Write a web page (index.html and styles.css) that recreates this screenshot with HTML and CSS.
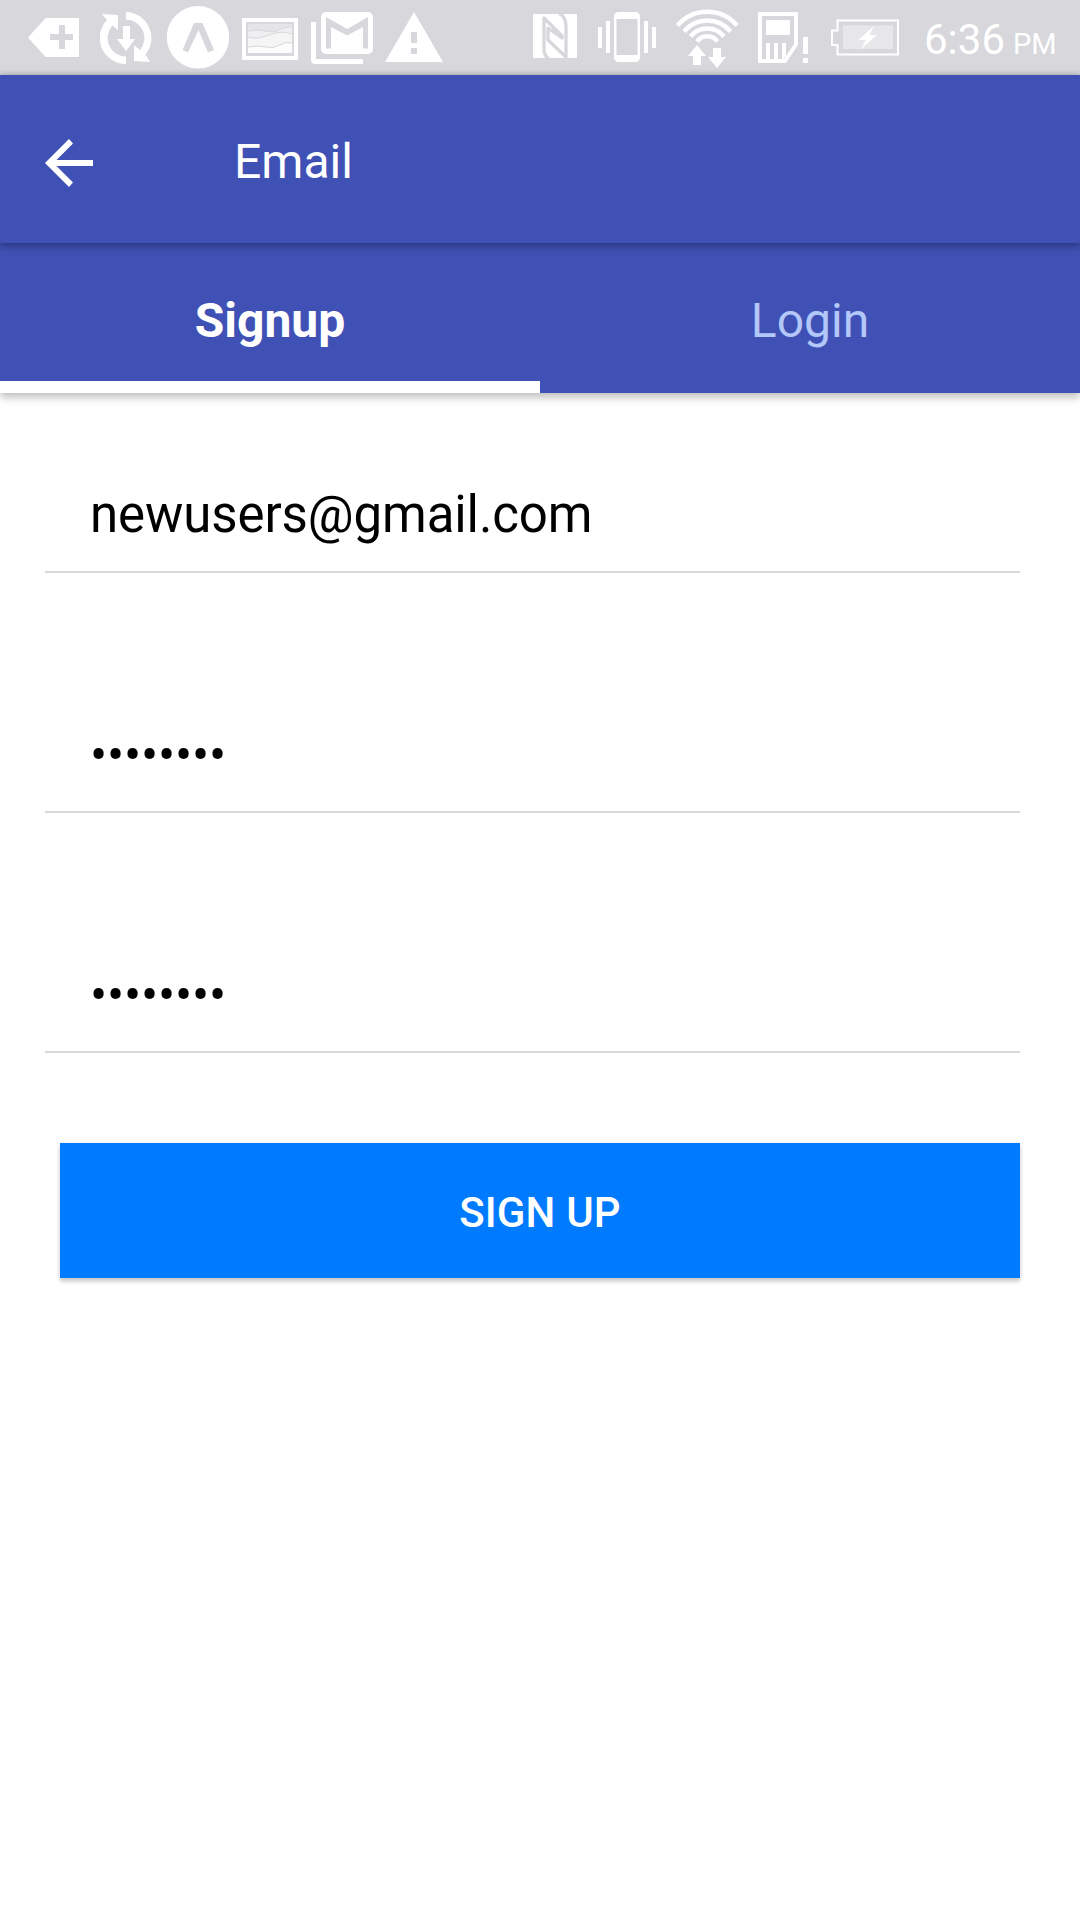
FILE: index.html
```html
<!DOCTYPE html>
<html lang="en">
<head>
<meta charset="utf-8">
<title>Email</title>
<link rel="stylesheet" href="styles.css">
</head>
<body>
<div class="screen">
  <div class="status-bar">
    <div class="status-group">
      <svg class="icon" width="52" height="75" viewBox="28 0 52 75"><path fill-rule="evenodd" d="M28 37.500L45.500 18H79V57H45.500ZM59 25V34H50V40H59V49H65V40H73V34H65V25Z"/></svg>
      <svg class="icon" width="52" height="75" viewBox="100 0 52 75"><path d="M126 12A26 26 0 0 1 145.500 54.500L150 62L134 61V45L140 50A18.500 18.500 0 0 0 126 19.500ZM126 64A26 26 0 0 1 107 20L102 14L118 15V30L112.500 25.500A18.500 18.500 0 0 0 126 56.500ZM123 26H130V39H135L126 51L117 39H123Z"/></svg>
      <svg class="icon" width="62" height="75" viewBox="167 0 62 75"><circle cx="198" cy="37.300" r="31.200"/><path class="cutout" d="M194 23H202.500L214 50L208 52.500L198.500 30L188 52.500L182.500 50Z"/></svg>
      <svg class="icon" width="56" height="75" viewBox="242 0 56 75"><path fill-rule="evenodd" d="M242 18H298V60H242ZM246 22V56H294V22Z"/><path opacity=".35" d="M248 24H292V53H248Z"/><path opacity=".4" d="M248 31Q257 29 266 31T279 30T292 27V53H248Z"/><path opacity=".4" d="M248 37Q256 40 269 35T292 34V53H248Z"/><path opacity=".8" d="M248 47Q258 45 266 47T280 45T292 43V53H248Z"/><path class="ridge" d="M248 31Q257 29 266 31T279 30T292 27M248 37Q256 40 269 35T292 34M248 47Q258 45 266 47T280 45T292 43"/></svg>
      <svg class="icon" width="62" height="75" viewBox="311 0 62 75"><path d="M311 22H316V59H363V64H315Q311 64 311 60Z"/><rect x="321" y="12" width="52" height="42" rx="5"/><path class="cutout" d="M326 17L347.200 29L368 17V48.500H363V27L347.200 35.500L331 27V48.500H326Z"/></svg>
      <svg class="icon" width="58" height="75" viewBox="385 0 58 75"><path fill-rule="evenodd" d="M414 12L443 62H385ZM411 32V43H417V32ZM411 48V54H417V48Z"/></svg>
    </div>
    <div class="status-group system">
      <svg class="icon" width="44" height="75" viewBox="533 0 44 75"><rect x="533" y="14" width="44" height="44" rx="1"/><path class="nfc-line" d="M549 59Q544 56 544 49V18L562 36V38L548 28V40L566 57V26Q566 17 559 13"/></svg>
      <svg class="icon" width="58" height="75" viewBox="598 0 58 75"><path fill-rule="evenodd" d="M619 12H635Q640 12 640 17V57Q640 62 635 62H619Q614 62 614 57V17Q614 12 619 12ZM616.500 19V55H637.500V19ZM598 27H602V48H598ZM606 21H610V53H606ZM644 21H648V53H644ZM652 27H656V48H652Z"/></svg>
      <svg class="icon" width="64" height="75" viewBox="675 0 64 75"><g class="waves"><path d="M677.500 25.500A39 39 0 0 1 737 25.500"/><path d="M684 31.500A30 30 0 0 1 730.500 31.500"/><path d="M690.500 36.500A21.500 21.500 0 0 1 724 36.500"/><path d="M697 41.500A12.500 12.500 0 0 1 717.500 41.500"/></g><path d="M697 45L706 56H701V65H693V56H688ZM713 48H721V57H726L717 68L708 57H713Z"/></svg>
      <svg class="icon" width="50" height="75" viewBox="758 0 50 75"><path fill-rule="evenodd" d="M758 12H798V45L786 63H758ZM762 16V59H784L794 44V16Z"/><path d="M766 20H790V35H766ZM766 43H770V60H766ZM774 43H778V60H774ZM782 43H786V56L782 60ZM803 37H808V54H803ZM803 58H808V63H803Z"/></svg>
      <svg class="icon" width="68" height="75" viewBox="831 0 68 75"><path class="battery" d="M837.500 20.500H898V54.500H837.500V45H832V30.500H837.500Z"/><rect x="843" y="25.500" width="50" height="23.500" opacity=".4"/><path d="M874 26L858.500 40H866L861 49L877 35H869.500Z"/></svg>
      <div class="clock">6:36<span class="meridiem">PM</span></div>
    </div>
  </div>

  <header class="app-bar">
    <svg class="back" width="48" height="48" viewBox="0 0 48 48"><path d="M48 21H11.500L28 4.500L24 0L0 24L24 48L28 43.500L11.500 27H48Z"/></svg>
    <div class="title">Email</div>
  </header>

  <nav class="tabs">
    <div class="tab active">Signup</div>
    <div class="tab">Login</div>
  </nav>

  <main class="form">
    <div class="field">newusers@gmail.com</div>
    <div class="field password">••••••••</div>
    <div class="field password">••••••••</div>
    <div class="submit">SIGN UP</div>
  </main>
</div>
</body>
</html>
```
FILE: styles.css
```css
* { box-sizing: border-box; }
body { margin: 0; background: #fff; font-family: Roboto, sans-serif; }
.screen { display: flex; flex-direction: column; width: 1080px; height: 1920px; overflow: hidden; background: #fff; }

.status-bar { display: flex; justify-content: space-between; height: 75px; padding: 0 26px 0 28px; background: #d8d7dc; color: #fff; }
.status-group { display: flex; height: 75px; }
.status-group .icon:nth-child(2) { margin-left: 20px; }
.status-group .icon:nth-child(3) { margin-left: 15px; }
.status-group .icon:nth-child(4) { margin-left: 13px; }
.status-group .icon:nth-child(5) { margin-left: 13px; }
.status-group .icon:nth-child(6) { margin-left: 12px; }
.status-group.system { width: 521px; }
.system .icon:nth-child(2) { margin-left: 21px; }
.system .icon:nth-child(3) { margin-left: 19px; }
.system .icon:nth-child(4) { margin-left: 19px; }
.system .icon:nth-child(5) { margin-left: 23px; }
.icon { display: block; flex: none; fill: #fff; }
.cutout { fill: #d8d7dc; }
.ridge { fill: none; stroke: #d8d7dc; stroke-width: 1; }
.nfc-line { fill: none; stroke: #d8d7dc; stroke-width: 3.3; stroke-linejoin: round; }
.waves { fill: none; stroke: #fff; stroke-width: 4.5; }
.battery { fill: none; stroke: #fff; stroke-width: 2; }
.clock { margin-left: 25px; font-size: 42px; line-height: 80px; white-space: nowrap; }
.meridiem { margin-left: 8px; font-size: 29px; }

.app-bar { position: relative; z-index: 2; display: flex; align-items: center; height: 168px; padding-left: 45px; background: #3f51b5; color: #fff; box-shadow: 0 4px 9px rgba(0, 0, 0, .2), 0 0 6px rgba(0, 0, 0, .25); }
.back { display: block; margin-top: 8px; fill: #fff; }
.title { margin: 5px 0 0 141px; font-size: 48px; line-height: 56px; }

.tabs { position: relative; z-index: 1; display: flex; height: 150px; background: #3f51b5; box-shadow: 0 4px 9px rgba(0, 0, 0, .28); }
.tab { flex: none; width: 540px; border-bottom: 12px solid transparent; padding-top: 9px; color: #b3c7f9; font-size: 48px; line-height: 138px; text-align: center; }
.tab.active { border-bottom-color: #fff; color: #fff; font-weight: 700; }

.form { display: flex; flex-direction: column; padding: 30px 60px 0 45px; }
.field { height: 150px; margin-bottom: 90px; padding-left: 45px; border-bottom: 2px solid #d8d7dc; font-size: 51px; line-height: 184px; letter-spacing: -.1px; color: #000; }
.field.password { line-height: 185px; letter-spacing: -.22px; }
.submit { height: 135px; margin-left: 15px; background: #007aff; color: #fff; font-size: 42px; font-weight: 500; line-height: 140px; letter-spacing: .15px; text-align: center; box-shadow: 0 4px 4px rgba(0, 0, 0, .15), 0 1px 5px rgba(0, 0, 0, .12); }
```
